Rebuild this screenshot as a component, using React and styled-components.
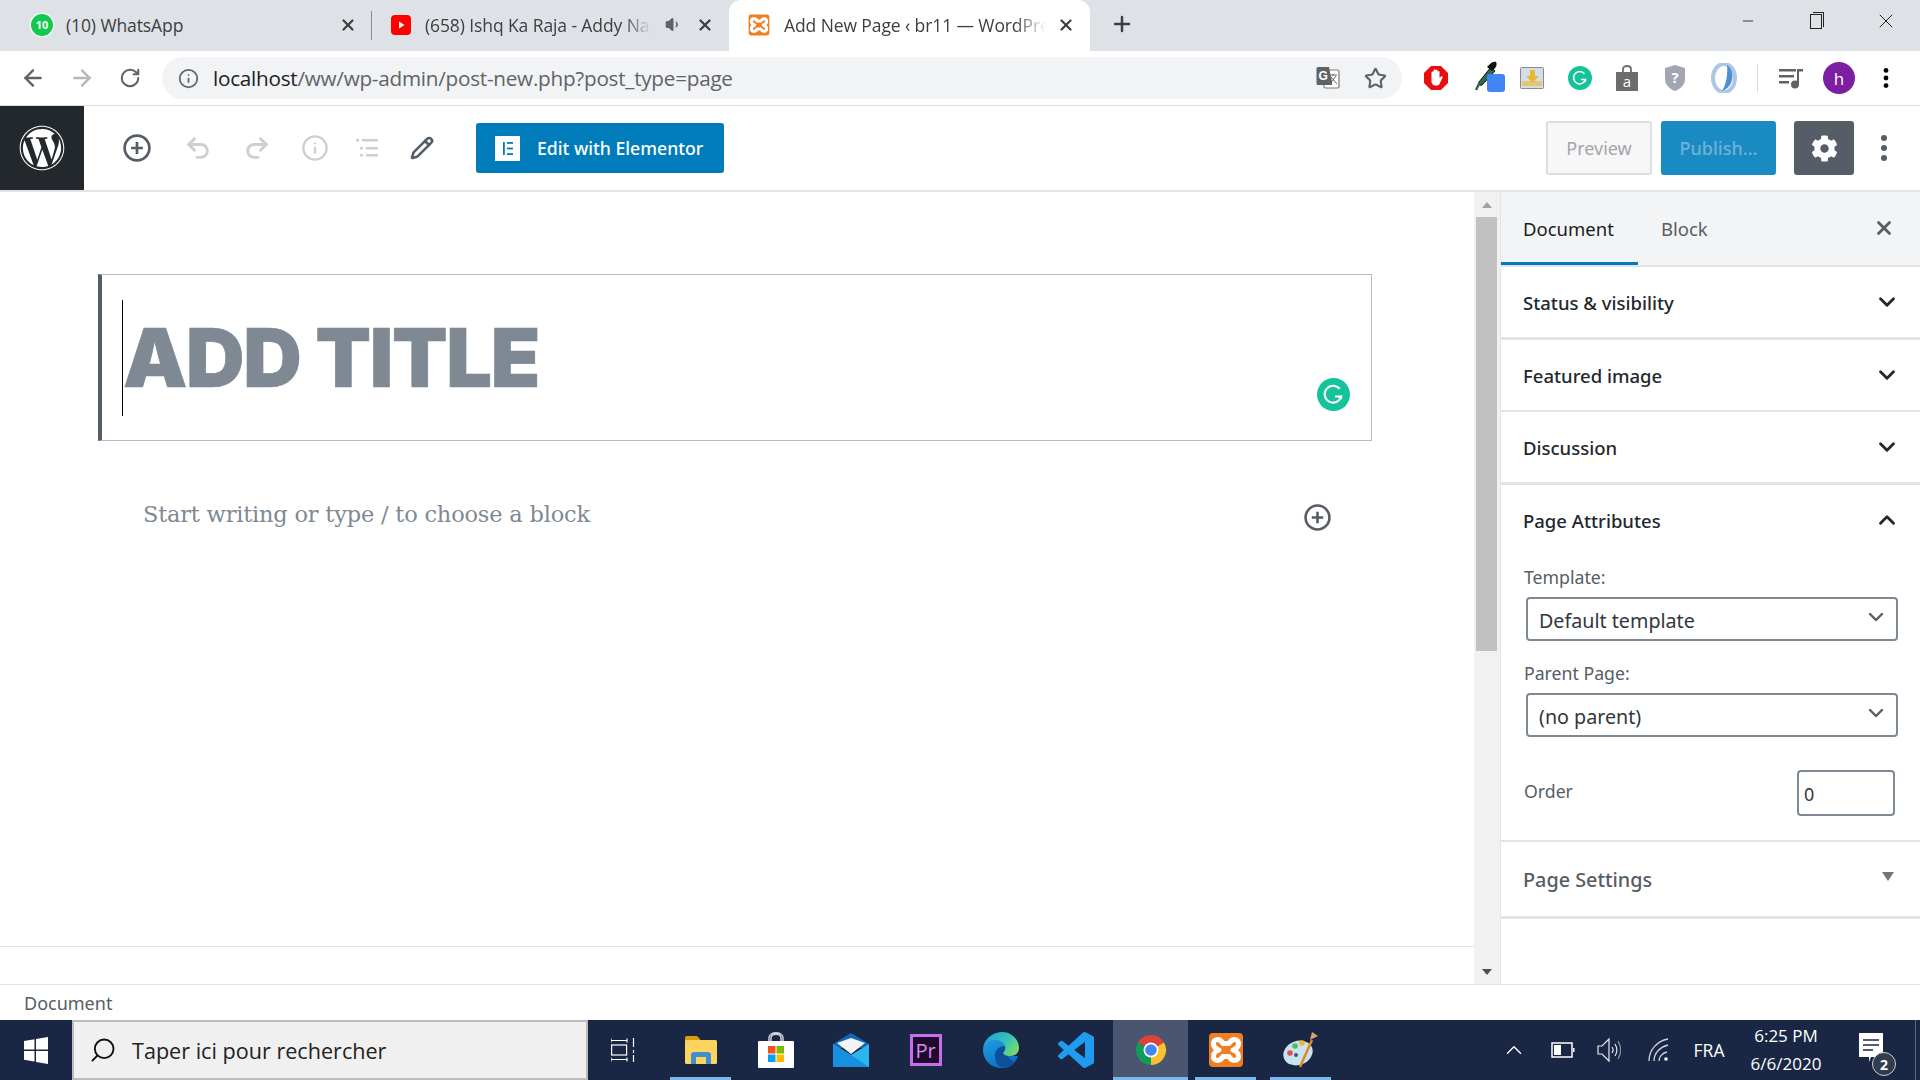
import React from 'react'
import styled, { createGlobalStyle } from 'styled-components'
import { ArrowLeft, ArrowRight, RotateCw, Info, Star, X, ChevronDown, ChevronUp, Undo2, Redo2, Pencil, Search, Plus, Volume1, Minus } from 'lucide-react'
import { FaWordpress, FaCog } from 'react-icons/fa'

const Global = createGlobalStyle`
  html, body { margin: 0; padding: 0; background: #fff; overflow: hidden; }
  * { box-sizing: border-box; }
  body { font-family: "Noto Sans", "Open Sans", sans-serif; }
`

const Page = styled.div`
  width: 1920px;
  height: 1080px;
  display: flex;
  flex-direction: column;
  overflow: hidden;
`

/* browser chrome */
const TabStrip = styled.div`
  height: 51px;
  flex: none;
  display: flex;
  background: #dee1e6;
`
const Tab = styled.div`
  width: ${p => p.$w}px;
  height: 51px;
  flex: none;
  display: flex;
  align-items: center;
  position: relative;
  padding: 0 15px 2px ${p => p.$pad}px;
  font-family: "Open Sans", sans-serif;
  font-size: 17.5px;
  letter-spacing: -0.1px;
  color: #3c4043;
  background: ${p => (p.$active ? '#fff' : 'transparent')};
  border-radius: ${p => (p.$active ? '12px 12px 0 0' : '0')};
`
const TabSep = styled.span`
  position: absolute;
  right: 0;
  top: 11px;
  height: 29px;
  width: 1px;
  background: #8a8d91;
`
const TabTitle = styled.span`
  margin-left: ${p => p.$gap}px;
  width: ${p => p.$w}px;
  flex: none;
  overflow: hidden;
  white-space: nowrap;
  -webkit-mask-image: ${p => (p.$fade ? 'linear-gradient(90deg, #000 88%, transparent)' : 'none')};
  mask-image: ${p => (p.$fade ? 'linear-gradient(90deg, #000 88%, transparent)' : 'none')};
`
const TabClose = styled(X)`
  margin-left: auto;
  color: #3c4043;
  flex: none;
`
const TabSpeaker = styled(Volume1)`
  margin-left: 14px;
  flex: none;
  color: #5f6368;
  fill: #5f6368;
`
const NewTab = styled(Plus)`
  margin: 12px 0 0 20px;
  color: #3c4043;
  flex: none;
`
const WindowButtons = styled.div`
  margin-left: auto;
  display: flex;
  height: 42px;
  align-items: center;
  color: #222;
`
const WinButton = styled.div`
  width: ${p => p.$w}px;
  display: flex;
  justify-content: center;
`
const Restore = styled.span`
  width: 12px;
  height: 15px;
  border: 1px solid #222;
  position: relative;
  background: #dee1e6;
  &::after {
    content: '';
    position: absolute;
    top: -3px;
    left: 2px;
    width: 10px;
    height: 14px;
    border: 1px solid #222;
    border-left: none;
    border-bottom: none;
  }
`
const Badge10 = styled.span`
  width: 22px;
  height: 22px;
  flex: none;
  position: relative;
  border-radius: 50%;
  background: #12c84f;
  box-shadow: 0 0 0 1.5px #f4faf5;
  color: #fff;
  font: 700 11px "Open Sans", sans-serif;
  display: flex;
  align-items: center;
  justify-content: center;
  &::after {
    content: '';
    position: absolute;
    left: -2px;
    bottom: -2px;
    width: 7px;
    height: 7px;
    background: #f4faf5;
    z-index: -1;
  }
`

const AddressBar = styled.div`
  height: 55px;
  flex: none;
  display: flex;
  align-items: center;
  background: #fff;
  border-bottom: 1px solid #dadce0;
`
const NavSlot = styled.div`
  width: ${p => p.$w}px;
  flex: none;
  display: flex;
  justify-content: center;
  color: ${p => p.$c || '#5f6368'};
`
const UrlPill = styled.div`
  width: 1240px;
  height: 42px;
  flex: none;
  border-radius: 21px;
  background: #f1f3f4;
  display: flex;
  align-items: center;
  padding: 0 15px 0 16px;
  color: #5f6368;
`
const UrlText = styled.div`
  margin-left: 14px;
  flex: 1;
  font-family: "Open Sans", sans-serif;
  font-size: 20.7px;
  color: #5f6368;
  letter-spacing: -0.25px;
  b { font-weight: 400; color: #202124; }
`
const UrlStar = styled(Star)`
  margin-left: 24px;
  flex: none;
`
const ExtSlot = styled.div`
  width: ${p => p.$w}px;
  flex: none;
  display: flex;
  justify-content: center;
  align-items: center;
  position: relative;
`
const Separator = styled.span`
  width: 1px;
  height: 28px;
  background: #dadce0;
`
const BlueDot = styled.span`
  position: absolute;
  left: 17px;
  top: 13px;
  width: 18px;
  height: 18px;
  border-radius: 3px;
  background: #4285f4;
`
const Avatar = styled.span`
  width: 32px;
  height: 32px;
  border-radius: 50%;
  background: #7b1fa2;
  color: #fff;
  font: 400 17px "Open Sans", sans-serif;
  display: flex;
  align-items: center;
  justify-content: center;
`

/* wordpress toolbar */
const Toolbar = styled.div`
  height: 86px;
  flex: none;
  display: flex;
  background: #fff;
  border-bottom: 2px solid #e2e4e7;
`
const LogoBox = styled.div`
  width: 84px;
  flex: none;
  background: #23282d;
  color: #fff;
  display: flex;
  align-items: center;
  justify-content: center;
  margin-right: 24px;
`
const ToolButton = styled.div`
  width: ${p => p.$w}px;
  flex: none;
  display: flex;
  align-items: center;
  justify-content: center;
  color: ${p => (p.$off ? '#cdd0d3' : '#555d66')};
`
const ElementorButton = styled.div`
  margin: 17px 0 0 22px;
  width: 248px;
  height: 50px;
  background: #007cba;
  border-radius: 3px;
  color: #fff;
  display: flex;
  align-items: center;
  padding-left: 19px;
  font-size: 17.7px;
  font-weight: 500;
`
const ElementorMark = styled.span`
  width: 25px;
  height: 25px;
  margin-right: 17px;
  background: #fff;
  color: #007cba;
  display: flex;
  align-items: center;
  justify-content: center;
`
const ToolbarRight = styled.div`
  margin-left: auto;
  display: flex;
  align-items: center;
  padding-right: 66px;
  gap: 9px;
  position: relative;
`
const PreviewButton = styled.div`
  width: 106px;
  height: 54px;
  border: 2px solid #dedfe0;
  border-radius: 3px;
  background: #f7f7f7;
  color: #a2a6aa;
  font-size: 18px;
  display: flex;
  align-items: center;
  justify-content: center;
`
const PublishButton = styled.div`
  width: 115px;
  height: 54px;
  border-radius: 3px;
  background: #1a8ac3;
  color: #6eb3d8;
  font-size: 18px;
  font-weight: 500;
  display: flex;
  align-items: center;
  justify-content: center;
`
const SettingsButton = styled.div`
  width: 60px;
  height: 54px;
  margin-left: 9px;
  border-radius: 3px;
  background: #555d66;
  color: #fff;
  display: flex;
  align-items: center;
  justify-content: center;
`
const MoreDots = styled.div`
  position: absolute;
  right: 33px;
  top: 50%;
  transform: translateY(-50%);
  color: #555d66;
  display: flex;
`

/* main */
const Main = styled.div`
  flex: 1;
  min-height: 0;
  display: flex;
`
const Canvas = styled.div`
  width: 1474px;
  flex: none;
  display: flex;
  flex-direction: column;
`
const CanvasBody = styled.div`
  flex: 1;
  padding: 82px 0 0 98px;
`
const CanvasFoot = styled.div`
  height: 38px;
  flex: none;
  border-top: 1px solid #e2e4e7;
`
const TitleBlock = styled.div`
  width: 1274px;
  height: 167px;
  position: relative;
  border: 1px solid #b5bcc2;
  border-left: 4px solid #555d66;
  padding: 25px 0 0 20px;
  display: flex;
`
const Caret = styled.span`
  width: 1px;
  height: 116px;
  background: #000;
  flex: none;
  position: relative;
  z-index: 1;
`
const TitleText = styled.div`
  font-family: Inter, sans-serif;
  font-weight: 900;
  font-size: 81px;
  line-height: 116px;
  letter-spacing: -1.3px;
  -webkit-text-stroke: 0.6px #7e8993;
  color: #7e8993;
`
const GrammarlyFloat = styled.div`
  position: absolute;
  right: 21px;
  bottom: 29px;
  display: flex;
`
const AppenderRow = styled.div`
  width: 1188px;
  margin: 63px 0 0 45px;
  display: flex;
  justify-content: space-between;
  align-items: center;
  color: #555d66;
`
const Placeholder = styled.div`
  font-family: "DejaVu Serif", serif;
  font-size: 22.5px;
  letter-spacing: -0.2px;
  color: #7e8993;
  margin-top: -7px;
`
const Scrollbar = styled.div`
  width: 26px;
  flex: none;
  background: #f1f1f1;
  display: flex;
  flex-direction: column;
  align-items: center;
  padding-right: 1px;
`
const ArrowCell = styled.div`
  height: 25px;
  flex: none;
  display: flex;
  align-items: center;
  justify-content: center;
  &::before {
    content: '';
    border-left: 5px solid transparent;
    border-right: 5px solid transparent;
    ${p => (p.$down ? 'border-top: 6px solid #505050;' : 'border-bottom: 6px solid #a3a3a3;')}
  }
`
const Thumb = styled.div`
  width: 21px;
  height: 434px;
  flex: none;
  background: #c1c1c1;
  margin-bottom: auto;
`

/* sidebar */
const Sidebar = styled.div`
  width: 420px;
  flex: none;
  border-left: 1px solid #e2e4e7;
  background: #fff;
  font-size: 18.5px;
  color: #23282d;
`
const SideTabs = styled.div`
  height: 75px;
  background: #f3f4f5;
  border-bottom: 2px solid #e2e4e7;
  display: flex;
  align-items: stretch;
`
const SideTab = styled.div`
  width: ${p => p.$w}px;
  height: 73px;
  flex: none;
  padding-left: ${p => p.$pad}px;
  padding-top: 3px;
  display: flex;
  align-items: center;
  border-bottom: 3px solid ${p => (p.$active ? '#007cba' : 'transparent')};
  font-weight: 400;
  color: ${p => (p.$active ? '#191e23' : '#555d66')};
`
const SideClose = styled(X)`
  margin: 25px 25px 0 auto;
  color: #555d66;
`
const Section = styled.section`
  border-bottom: ${p => p.$line || 3}px solid #e2e4e7;
`
const SectionHead = styled.div`
  height: ${p => p.$h || 70}px;
  margin-bottom: ${p => p.$mb || 0}px;
  display: flex;
  align-items: center;
  justify-content: space-between;
  padding: 0 20px 0 22px;
  font-weight: 500;
  font-size: ${p => p.$fs || 18.5}px;
  color: ${p => p.$c || '#23282d'};
`
const Triangle = styled.span`
  margin: 0 6px 6px 0;
  border-left: 6px solid transparent;
  border-right: 6px solid transparent;
  border-top: 9px solid #6c7781;
`
const FieldLabel = styled.div`
  height: 24px;
  line-height: 24px;
  margin-left: 23px;
  font-size: 17.7px;
  color: #555d66;
`
const OrderLabel = styled(FieldLabel)`
  margin: -5px 0 0 0;
`
const SelectBox = styled.div`
  width: 372px;
  height: 44px;
  margin: 8px 0 20px 25px;
  border: 2px solid #7e8993;
  border-radius: 4px;
  padding: 2px 8px 0 11px;
  display: flex;
  align-items: center;
  justify-content: space-between;
  font-size: 19.7px;
  color: #32373c;
  svg { margin-top: -6px; color: #555d66; }
`
const OrderRow = styled.div`
  display: flex;
  align-items: center;
  justify-content: space-between;
  padding: 13px 25px 24px 23px;
`
const OrderInput = styled.input`
  width: 98px;
  height: 46px;
  border: 2px solid #7e8993;
  border-radius: 4px;
  padding: 2px 5px 0;
  font: 400 18px "Noto Sans", sans-serif;
  color: #32373c;
  outline: none;
`

const StatusBar = styled.div`
  height: 36px;
  flex: none;
  border-top: 1px solid #e2e4e7;
  background: #fff;
  padding-left: 24px;
  display: flex;
  align-items: center;
  font-size: 18px;
  color: #555d66;
`

/* windows taskbar */
const Taskbar = styled.div`
  height: 60px;
  flex: none;
  display: flex;
  background: #1a2744;
  color: #fff;
`
const StartSlot = styled.div`
  width: 72px;
  flex: none;
  display: flex;
  align-items: center;
  justify-content: center;
`
const SearchBox = styled.div`
  width: 516px;
  flex: none;
  background: #f0f0f0;
  border: 2px solid #bdbdbd;
  display: flex;
  align-items: center;
  padding-left: 15px;
  font-family: "Open Sans", sans-serif;
  font-size: 21.6px;
  color: #222;
`
const SearchGlass = styled(Search)`
  transform: scaleX(-1);
  margin-right: 15px;
  color: #111;
`
const TaskSlot = styled.div`
  width: ${p => p.$w || 75}px;
  margin-right: ${p => p.$mr || 0}px;
  flex: none;
  display: flex;
  align-items: center;
  justify-content: center;
  position: relative;
  background: ${p => (p.$active ? '#4a5670' : 'transparent')};
  &::after {
    content: ${p => (p.$open ? "''" : 'none')};
    position: absolute;
    bottom: 0;
    height: 3px;
    left: ${p => (p.$active ? 0 : 7)}px;
    right: ${p => (p.$active ? 0 : 7)}px;
    background: #76b9ed;
  }
`
const PrIcon = styled.span`
  width: 32px;
  height: 32px;
  background: #1f0a2e;
  border: 3px solid #c86ee8;
  color: #d98bf3;
  font: 400 20px "Open Sans", sans-serif;
  display: flex;
  align-items: center;
  justify-content: center;
`
const Tray = styled.div`
  margin-left: auto;
  display: flex;
  padding-right: 22px;
  position: relative;
  &::after {
    content: '';
    position: absolute;
    right: 4px;
    top: 0;
    bottom: 0;
    width: 1px;
    background: #5d6880;
  }
`
const TraySlot = styled.div`
  width: ${p => p.$w}px;
  flex: none;
  display: flex;
  align-items: center;
  justify-content: center;
  position: relative;
  font-family: "Open Sans", sans-serif;
  font-size: 17.5px;
`
const Clock = styled.div`
  display: flex;
  flex-direction: column;
  align-items: center;
  gap: 6px;
  line-height: 22px;
  font-size: 17px;
  margin-right: 2px;
`
const NotifCount = styled.span`
  position: absolute;
  right: 2px;
  bottom: 4px;
  width: 24px;
  height: 24px;
  border-radius: 50%;
  background: #333b4e;
  border: 1px solid #ccc;
  font-size: 14px;
  font-weight: 700;
  display: flex;
  align-items: center;
  justify-content: center;
`

const XamppLogo = ({ size }) => (
  <svg width={size} height={size} viewBox="0 0 36 36">
    <rect x="1" y="1" width="34" height="34" rx="4" fill="#ef7f22" />
    <path
      d="M15 11.5C12 6 5 6.5 5.5 12c.2 3 2.5 5 5.5 6-3 1-5.3 3-5.5 6-.5 5.500 6.500 6 9.500.5h6c3 5.500 10 5 9.500-.5-.2-3-2.500-5-5.500-6 3-1 5.300-3 5.500-6 .5-5.500-6.500-6-9.500-.5z"
      fill="none"
      stroke="#fff"
      strokeWidth="5"
      strokeLinejoin="round"
    />
  </svg>
)

const GrammarlyMark = ({ size }) => (
  <svg width={size} height={size} viewBox="0 0 32 32">
    <circle cx="16" cy="16" r="16" fill="#15c39a" />
    <path d="M22 10.500a8.200 8.200 0 1 0 1.500 7.500h-6" fill="none" stroke="#fff" strokeWidth="2" />
    <path d="M24.500 21l-1-4-4 1z" fill="#fff" />
  </svg>
)

const PlusCircle = ({ size }) => (
  <svg width={size} height={size} viewBox="0 0 26 26">
    <circle cx="13" cy="13" r="11.500" fill="none" stroke="currentColor" strokeWidth="2.500" />
    <path d="M13 7.500v11M7.500 13h11" stroke="currentColor" strokeWidth="2.500" />
  </svg>
)

const VDots = ({ size, r }) => (
  <svg width="6" height={size} viewBox={`0 0 6 ${size}`} fill="currentColor">
    <circle cx="3" cy={r} r={r} />
    <circle cx="3" cy={size / 2} r={r} />
    <circle cx="3" cy={size - r} r={r} />
  </svg>
)

const ListIcon = () => (
  <svg width="24" height="20" viewBox="0 0 24 20" fill="currentColor">
    <rect x="0" y="1" width="3" height="2.500" />
    <rect x="6" y="1" width="16" height="2.500" />
    <rect x="4" y="9" width="3" height="2.500" />
    <rect x="10" y="9" width="12" height="2.500" />
    <rect x="4" y="16" width="3" height="2.500" />
    <rect x="10" y="16" width="12" height="2.500" />
  </svg>
)

const ChromeIcon = () => (
  <svg width="34" height="34" viewBox="0 0 34 34">
    <path d="M17 17L4 9.500A15 15 0 0 1 30 9.500z" fill="#db4437" />
    <path d="M17 17L30 9.500A15 15 0 0 1 17 32z" fill="#fbc02d" />
    <path d="M17 17L17 32A15 15 0 0 1 4 9.500z" fill="#109d58" />
    <circle cx="17" cy="17" r="7.500" fill="#fff" />
    <circle cx="17" cy="17" r="5.800" fill="#4285f4" />
  </svg>
)

const EdgeIcon = () => (
  <svg width="36" height="36" viewBox="0 0 36 36">
    <defs>
      <linearGradient id="edgeBase" x1="0" y1="0" x2="0.6" y2="1">
        <stop offset="0" stopColor="#22a7e6" />
        <stop offset="1" stopColor="#0b6cc4" />
      </linearGradient>
      <linearGradient id="edgeArc" x1="0" y1="0.2" x2="1" y2="0.8">
        <stop offset="0" stopColor="#1fa5d8" />
        <stop offset="0.55" stopColor="#35c4b4" />
        <stop offset="1" stopColor="#82dd62" />
      </linearGradient>
    </defs>
    <path d="M0 18C0 8 8 3 14 3c5 0 9 6 9 12 0 6 2 9 6 9h6c-1 3-3 6-5 8-3 3-7 4-12 4C8 36 0 28 0 18z" fill="url(#edgeBase)" />
    <path d="M12 24c0-6 4-10 10-10 2 0 3 1 3 3-2 5 0 9 5 12l1 2c-3 3-8 5-13 4-4-2-6-6-6-11z" fill="#0d4f9a" />
    <path d="M1 13C4 5 11 0 19 0c10 0 17 8 17 16 0 5-4 8-9 8-4 0-6-1-7-3 3-3 3-7 0-10C15 6 6 7 1 13z" fill="url(#edgeArc)" />
  </svg>
)

const VSCodeIcon = () => (
  <svg width="36" height="36" viewBox="0 0 24 24" fill="#1f9cf0">
    <path d="M23.15 2.587L18.21.21a1.494 1.494 0 0 0-1.705.29l-9.46 8.63-4.12-3.128a.999.999 0 0 0-1.276.057L.327 7.261A1 1 0 0 0 .326 8.74L3.899 12 .326 15.26a1 1 0 0 0 .001 1.479L1.65 17.94a.999.999 0 0 0 1.276.057l4.12-3.128 9.46 8.63a1.492 1.492 0 0 0 1.704.29l4.942-2.377A1.5 1.500 0 0 0 24 20.06V3.939a1.5 1.500 0 0 0-.85-1.352zm-5.146 14.861L10.826 12l7.178-5.448v10.896z" />
  </svg>
)

const FolderIcon = () => (
  <svg width="32" height="30" viewBox="0 0 32 30">
    <path d="M0 3a2 2 0 0 1 2-2h10l3 3v3H0z" fill="#d9a00c" />
    <rect y="5" width="32" height="24" rx="1.500" fill="#fcd55f" />
    <path d="M6 29V20a3 3 0 0 1 3-3h14a3 3 0 0 1 3 3v9h-5v-7H11v7z" fill="#3e8fd0" />
  </svg>
)

const StoreIcon = () => (
  <svg width="36" height="36" viewBox="0 0 36 36">
    <path d="M11 10V6c0-7 14-7 14 0v4M13 10V6c0-5 10-5 10 0v4" fill="none" stroke="#cfd3d8" strokeWidth="1.500" />
    <rect y="9" width="36" height="27" rx="1" fill="#fff" />
    <rect x="10" y="14" width="7.500" height="7.500" fill="#f25022" />
    <rect x="18.500" y="14" width="7.500" height="7.500" fill="#7fba00" />
    <rect x="10" y="22.500" width="7.500" height="7.500" fill="#00a4ef" />
    <rect x="18.500" y="22.500" width="7.500" height="7.500" fill="#ffb900" />
  </svg>
)

const MailIcon = () => (
  <svg width="36" height="34" viewBox="0 0 36 34">
    <path d="M0 11L18 0l18 11v4H0z" fill="#0f68b5" />
    <path d="M4 10L18 5l14 5-14 11z" fill="#f4f4f4" />
    <path d="M0 11l18 11 18-11v23H0z" fill="#2bb6f0" />
    <path d="M0 34V11l18 11 18 12z" fill="#1791df" />
  </svg>
)

const PaletteIcon = () => (
  <svg width="36" height="38" viewBox="0 0 36 38">
    <ellipse cx="15" cy="22" rx="15" ry="12" fill="#c9e3f2" transform="rotate(-20 15 22)" />
    <circle cx="7" cy="22" r="2.800" fill="#e44f4f" />
    <circle cx="12" cy="15" r="2.800" fill="#5bb85b" />
    <circle cx="19" cy="12" r="2.800" fill="#f2b632" />
    <circle cx="13" cy="24" r="2" fill="#4a5670" />
    <path d="M17 36L29 9" stroke="#e08a1e" strokeWidth="2.500" />
    <path d="M27 9l2-8 6 4z" fill="#d7a66a" />
  </svg>
)

const WinLogo = () => (
  <svg width="24" height="27" viewBox="0 0 24 27" fill="#fff">
    <path d="M0 4l10.500-1.700v10.200H0zM12 2L24 0v12.500H12zM0 14h10.500v10.400L0 22.700zM12 14h12v13l-12-2z" />
  </svg>
)

const TaskViewIcon = () => (
  <svg width="24" height="24" viewBox="0 0 24 24" fill="none" stroke="#fff" strokeWidth="1.200">
    <path d="M0 2.500h16M0 21.500h16M16 .5v4M0 .5v4M16 19.500v4M0 19.500v4" />
    <rect x=".6" y="7" width="15" height="10" />
    <path d="M22.500 0v9M22.500 12v3M22.500 17v7" />
  </svg>
)

const BatteryIcon = () => (
  <svg width="24" height="16" viewBox="0 0 24 16">
    <rect x="1" y="1" width="20" height="14" fill="none" stroke="#fff" strokeWidth="1.500" />
    <rect x="3" y="3" width="7" height="10" fill="#fff" />
    <rect x="22" y="6" width="1.500" height="4" fill="#fff" />
  </svg>
)

const SpeakerIcon = () => (
  <svg width="24" height="28" viewBox="0 0 24 28" fill="none" stroke="#e6e8ec" strokeWidth="1.200">
    <path d="M1 10v8h4l7 7V3L5 10z" />
    <path d="M15 11c1.500 2 1.500 4 0 6M18 8c2.500 4 2.500 8 0 12" />
    <path d="M21 5c3.500 6 3.500 12 0 18" stroke="#8b93a5" />
  </svg>
)

const WifiIcon = () => (
  <svg width="22" height="24" viewBox="0 0 22 24" fill="none" stroke="#cfd3da" strokeWidth="1.300">
    <path d="M1 23C1 12 9 3 20 1M6 23c0-8 6-14 14-16M11 23c0-4 3-8 8-9" />
    <circle cx="18" cy="21" r="1.800" fill="#fff" stroke="none" />
  </svg>
)

const NotifIcon = () => (
  <svg width="24" height="34" viewBox="0 0 24 34">
    <path d="M0 0h24v24H12l-2 5v-5H0z" fill="#fff" />
    <path d="M4 7h16M4 12h16M4 17h10" stroke="#1a2744" strokeWidth="1.500" />
  </svg>
)

const TranslateIcon = () => (
  <svg width="24" height="24" viewBox="0 0 24 24">
    <rect x="8" y="4" width="15" height="18" rx="1.500" fill="#fff" stroke="#7a7a7a" strokeWidth="1.200" />
    <path d="M13 9l8 0M17 8v2M14 18l6-8M15 11l6 7" stroke="#666" strokeWidth="1" fill="none" />
    <path d="M2 1h11l3 15v3H2a1.500 1.500 0 0 1-1.500-1.500v-15A1.500 1.500 0 0 1 2 1z" fill="#5f6368" />
    <text x="2.500" y="14" fontFamily="Liberation Sans" fontWeight="700" fontSize="12" fill="#fff">G</text>
  </svg>
)

const AdblockIcon = () => (
  <svg width="24" height="24" viewBox="0 0 24 24">
    <path d="M7 0h10l7 7v10l-7 7H7l-7-7V7z" fill="#e80e0e" />
    <path d="M7.500 12V6.500a1 1 0 0 1 2 0V4.500a1 1 0 0 1 2 0a1 1 0 0 1 2 0V6a1 1 0 0 1 2 0v6l1.500-1.500c1-.8 2 .2 1.500 1L15.500 18c-.8 1-1.500 1.500-3 1.500h-1c-2.500 0-4-2-4-4z" fill="#fff" />
  </svg>
)

const DropperIcon = () => (
  <svg width="30" height="34" viewBox="0 0 30 34" style={{ marginLeft: -4 }}>
    <path d="M21 6l4 4-13 14c-3 1-4-1-3-3z" fill="#2b6e4f" stroke="#111" strokeWidth="1" />
    <path d="M19 4c2-3 6-4 7-3s1 5-2 7l-2 2-5-4z" fill="#111" />
    <path d="M9 23l-3 6" stroke="#2b6e4f" strokeWidth="2.500" />
  </svg>
)

const ImageIcon = () => (
  <svg width="24" height="22" viewBox="0 0 24 22">
    <rect x=".5" y=".5" width="23" height="21" rx="1" fill="#d8dce0" stroke="#8a8a8a" />
    <rect x="2" y="3" width="20" height="16" fill="#cfe0ee" />
    <rect x="2" y="14" width="20" height="5" fill="#e7c47c" />
    <path d="M10 3h5v6h4l-6.500 7L6 9h4z" fill="#e9b92b" />
  </svg>
)

const BagIcon = () => (
  <svg width="24" height="26" viewBox="0 0 24 26">
    <path d="M8 8V4c0-4 8-4 8 0v4" fill="none" stroke="#6c6c6c" strokeWidth="1.800" />
    <rect x="1" y="7" width="22" height="19" fill="#6c6c6c" />
    <text x="12" y="22" textAnchor="middle" fontFamily="Open Sans" fontSize="15" fill="#fff">a</text>
  </svg>
)

const ShieldIcon = () => (
  <svg width="22" height="26" viewBox="0 0 22 26">
    <path d="M11 0l10 3v11c0 6-5 10-10 12C6 24 1 20 1 14V3z" fill="#a2a6b4" />
    <text x="11" y="18" textAnchor="middle" fontFamily="Open Sans" fontWeight="700" fontSize="15" fill="#fff">?</text>
  </svg>
)

const RingIcon = () => (
  <svg width="26" height="30" viewBox="0 0 26 30">
    <ellipse cx="13" cy="15" rx="11" ry="14" fill="none" stroke="#a9c8e4" strokeWidth="4" />
    <path d="M16 2c6 4 7 13 3 20-2 3-5 5-8 6 4-6 6-16 5-26z" fill="#4f8fcc" />
  </svg>
)

const MusicIcon = () => (
  <svg width="24" height="24" viewBox="0 0 24 24" fill="#5f6368">
    <rect x="0" y="3" width="17" height="2.500" />
    <rect x="0" y="9" width="15" height="2.500" />
    <rect x="0" y="15" width="10" height="2.500" />
    <rect x="18" y="3" width="2" height="15" />
    <rect x="18" y="3" width="6" height="2.500" />
    <circle cx="16" cy="18.500" r="4" />
  </svg>
)

const ElementorIcon = () => (
  <svg width="10" height="13" viewBox="0 0 10 13" fill="currentColor">
    <rect x="0" y="0" width="1.800" height="13" />
    <rect x="4" y="0" width="6" height="1.800" />
    <rect x="4" y="5.600" width="6" height="1.800" />
    <rect x="4" y="11.200" width="6" height="1.800" />
  </svg>
)

const YoutubeIcon = () => (
  <svg width="20" height="20" viewBox="0 0 20 20">
    <rect width="20" height="20" rx="4" fill="#f00" />
    <path d="M8 6.500l5.500 3.500L8 13.500z" fill="#fff" />
  </svg>
)

export default function App() {
  return (
    <Page>
      <Global />
      <TabStrip>
        <Tab $w={372} $pad={31}>
          <Badge10>10</Badge10>
          <TabTitle $gap={13} $w={200}>(10) WhatsApp</TabTitle>
          <TabClose size={18} strokeWidth={3} />
          <TabSep />
        </Tab>
        <Tab $w={357} $pad={19}>
          <YoutubeIcon />
          <TabTitle $gap={14} $w={226} $fade>(658) Ishq Ka Raja - Addy Nagar</TabTitle>
          <TabSpeaker size={17} />
          <TabClose size={18} strokeWidth={3} />
        </Tab>
        <Tab $w={361} $pad={19} $active>
          <XamppLogo size={22} />
          <TabTitle $gap={14} $w={262} $fade>Add New Page ‹ br11 — WordPress</TabTitle>
          <TabClose size={18} strokeWidth={3} />
        </Tab>
        <NewTab size={24} strokeWidth={2.5} />
        <WindowButtons>
          <WinButton $w={64}><Minus size={16} strokeWidth={1.3} /></WinButton>
          <WinButton $w={72}><Restore /></WinButton>
          <WinButton $w={68}><X size={24} strokeWidth={1} /></WinButton>
        </WindowButtons>
      </TabStrip>

      <AddressBar>
        <NavSlot $w={66}><ArrowLeft size={26} strokeWidth={2.2} /></NavSlot>
        <NavSlot $w={32} $c="#b4b6b9"><ArrowRight size={26} strokeWidth={2.2} /></NavSlot>
        <NavSlot $w={64}><RotateCw size={22} strokeWidth={2.2} /></NavSlot>
        <UrlPill>
          <Info size={21} strokeWidth={2} />
          <UrlText><b>localhost</b>/ww/wp-admin/post-new.php?post_type=page</UrlText>
          <TranslateIcon />
          <UrlStar size={23} strokeWidth={2.2} />
        </UrlPill>
        <ExtSlot $w={68}><AdblockIcon /></ExtSlot>
        <ExtSlot $w={34}><DropperIcon /><BlueDot /></ExtSlot>
        <ExtSlot $w={56}><ImageIcon /></ExtSlot>
        <ExtSlot $w={40}><GrammarlyMark size={24} /></ExtSlot>
        <ExtSlot $w={54}><BagIcon /></ExtSlot>
        <ExtSlot $w={42}><ShieldIcon /></ExtSlot>
        <ExtSlot $w={56}><RingIcon /></ExtSlot>
        <ExtSlot $w={10}><Separator /></ExtSlot>
        <ExtSlot $w={58}><MusicIcon /></ExtSlot>
        <ExtSlot $w={38}><Avatar>h</Avatar></ExtSlot>
        <ExtSlot $w={56}><VDots size={20} r={2.4} /></ExtSlot>
      </AddressBar>

      <Toolbar>
        <LogoBox><FaWordpress size={46} /></LogoBox>
        <ToolButton $w={58}><PlusCircle size={28} /></ToolButton>
        <ToolButton $w={64} $off><Undo2 size={28} strokeWidth={2.5} /></ToolButton>
        <ToolButton $w={54} $off><Redo2 size={28} strokeWidth={2.5} /></ToolButton>
        <ToolButton $w={62} $off><Info size={28} strokeWidth={2} /></ToolButton>
        <ToolButton $w={44} $off><ListIcon /></ToolButton>
        <ToolButton $w={64}><Pencil size={24} strokeWidth={2.6} /></ToolButton>
        <ElementorButton>
          <ElementorMark><ElementorIcon /></ElementorMark>
          Edit with Elementor
        </ElementorButton>
        <ToolbarRight>
          <PreviewButton>Preview</PreviewButton>
          <PublishButton>Publish...</PublishButton>
          <SettingsButton><FaCog size={27} /></SettingsButton>
          <MoreDots><VDots size={26} r={3} /></MoreDots>
        </ToolbarRight>
      </Toolbar>

      <Main>
        <Canvas>
          <CanvasBody>
            <TitleBlock>
              <Caret />
              <TitleText>ADD TITLE</TitleText>
              <GrammarlyFloat><GrammarlyMark size={33} /></GrammarlyFloat>
            </TitleBlock>
            <AppenderRow>
              <Placeholder>Start writing or type / to choose a block</Placeholder>
              <PlusCircle size={27} />
            </AppenderRow>
          </CanvasBody>
          <CanvasFoot />
        </Canvas>
        <Scrollbar>
          <ArrowCell />
          <Thumb />
          <ArrowCell $down />
        </Scrollbar>
        <Sidebar>
          <SideTabs>
            <SideTab $w={137} $pad={22} $active>Document</SideTab>
            <SideTab $w={100} $pad={23}>Block</SideTab>
            <SideClose size={22} strokeWidth={3} />
          </SideTabs>
          <Section>
            <SectionHead>Status &amp; visibility<ChevronDown size={26} strokeWidth={2.6} /></SectionHead>
          </Section>
          <Section $line={2}>
            <SectionHead>Featured image<ChevronDown size={26} strokeWidth={2.6} /></SectionHead>
          </Section>
          <Section>
            <SectionHead>Discussion<ChevronDown size={26} strokeWidth={2.6} /></SectionHead>
          </Section>
          <Section $line={2}>
            <SectionHead $h={70} $mb={10}>Page Attributes<ChevronUp size={26} strokeWidth={2.6} /></SectionHead>
            <FieldLabel>Template:</FieldLabel>
            <SelectBox>Default template<ChevronDown size={24} strokeWidth={2.4} /></SelectBox>
            <FieldLabel>Parent Page:</FieldLabel>
            <SelectBox>(no parent)<ChevronDown size={24} strokeWidth={2.4} /></SelectBox>
            <OrderRow>
              <OrderLabel>Order</OrderLabel>
              <OrderInput readOnly value="0" />
            </OrderRow>
          </Section>
          <Section>
            <SectionHead $h={74} $c="#555d66" $fs={19.8}>Page Settings<Triangle /></SectionHead>
          </Section>
        </Sidebar>
      </Main>

      <StatusBar>Document</StatusBar>

      <Taskbar>
        <StartSlot><WinLogo /></StartSlot>
        <SearchBox>
          <SearchGlass size={28} strokeWidth={1.6} />
          Taper ici pour rechercher
        </SearchBox>
        <TaskSlot $w={70} $mr={5}><TaskViewIcon /></TaskSlot>
        <TaskSlot $open><FolderIcon /></TaskSlot>
        <TaskSlot><StoreIcon /></TaskSlot>
        <TaskSlot><MailIcon /></TaskSlot>
        <TaskSlot><PrIcon>Pr</PrIcon></TaskSlot>
        <TaskSlot><EdgeIcon /></TaskSlot>
        <TaskSlot><VSCodeIcon /></TaskSlot>
        <TaskSlot $open $active><ChromeIcon /></TaskSlot>
        <TaskSlot $open><XamppLogo size={36} /></TaskSlot>
        <TaskSlot $open><PaletteIcon /></TaskSlot>
        <Tray>
          <TraySlot $w={48}><ChevronUp size={26} strokeWidth={1.3} /></TraySlot>
          <TraySlot $w={50}><BatteryIcon /></TraySlot>
          <TraySlot $w={42}><SpeakerIcon /></TraySlot>
          <TraySlot $w={58}><WifiIcon /></TraySlot>
          <TraySlot $w={42}>FRA</TraySlot>
          <TraySlot $w={114}>
            <Clock><span>6:25 PM</span><span>6/6/2020</span></Clock>
          </TraySlot>
          <TraySlot $w={54}>
            <NotifIcon />
            <NotifCount>2</NotifCount>
          </TraySlot>
        </Tray>
      </Taskbar>
    </Page>
  )
}
